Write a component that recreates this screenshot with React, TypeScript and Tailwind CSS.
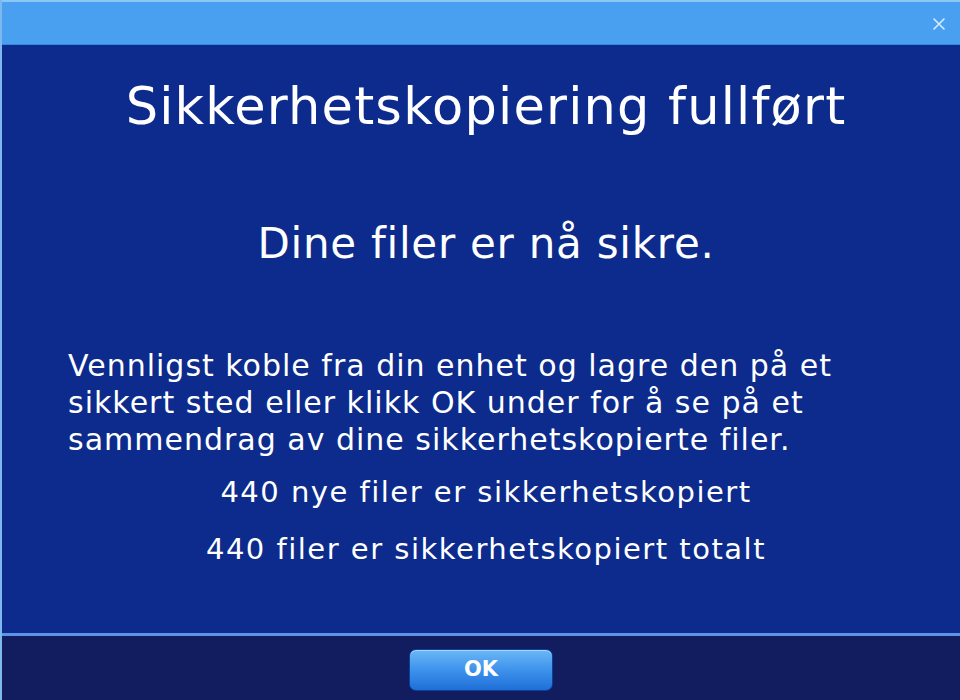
const App = () => {
  return (
    <div
      className="w-[960px] h-[700px] flex flex-col overflow-hidden bg-[#0c2b8c] border-l-2 border-[#7fb8ee]"
      style={{ fontFamily: '"DejaVu Sans", Verdana, sans-serif' }}
    >
      {/* title bar */}
      <div className="h-[45px] shrink-0 flex items-center justify-end pr-[14px] bg-[#4aa0f0] border-t-2 border-[#8cc6f4] border-b border-b-[#3a86d8]">
        <svg width="14" height="14" viewBox="0 0 14 14" className="mt-[2px]">
          <path d="M2 2 L12 12 M12 2 L2 12" stroke="#d6ecff" strokeWidth="1.6" strokeLinecap="round" />
        </svg>
      </div>

      {/* body */}
      <div className="flex-1 flex flex-col items-center text-white pl-[10px]">
        <h1 className="mt-[32px] text-[51px] leading-[60px] tracking-[1.2px]">Sikkerhetskopiering fullført</h1>
        <p className="mt-[82px] text-[42px] leading-[50px] tracking-[0.75px]">Dine filer er nå sikre.</p>
        <p className="mt-[78px] self-start pl-[56px] text-[30px] leading-[37px] tracking-[1px]">
          Vennligst koble fra din enhet og lagre den på et
          <br />
          sikkert sted eller klikk OK under for å se på et
          <br />
          sammendrag av dine sikkerhetskopierte filer.
        </p>
        <p className="mt-[17px] text-[29px] leading-[34px] tracking-[1.5px]">440 nye filer er sikkerhetskopiert</p>
        <p className="mt-[23px] text-[29px] leading-[34px] tracking-[1.5px]">440 filer er sikkerhetskopiert totalt</p>
      </div>

      {/* footer */}
      <div className="h-[67px] shrink-0 flex items-center justify-center bg-[#111d5e] border-t-[3px] border-[#5f93e6]">
        <button className="mt-[3px] w-[144px] h-[42px] rounded-[7px] border border-[#0a3f9a] bg-gradient-to-b from-[#6ab8f6] via-[#3d92ec] to-[#1f6fd8] text-white font-bold text-[21px] shadow-[inset_0_1px_0_#a9d7ff]">
          OK
        </button>
      </div>
    </div>
  );
};

export default App;
